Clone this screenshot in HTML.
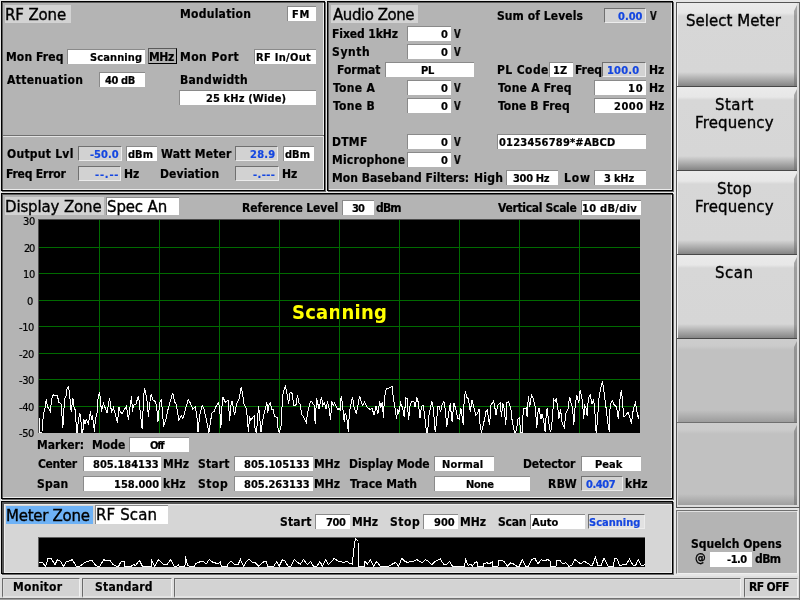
<!DOCTYPE html>
<html><head><meta charset="utf-8"><title>RF Scan</title>
<style>
html,body{margin:0;padding:0}
body{width:800px;height:600px;overflow:hidden;background:#e6e6e6;position:relative;font-family:"DejaVu Sans Condensed","DejaVu Sans","Liberation Sans",sans-serif;font-stretch:condensed;color:#000}
div,span{position:absolute;box-sizing:border-box;white-space:nowrap}
span{will-change:transform}
.p{background:#b4b4b4;border:1px solid #000;box-shadow:inset 1px 1px 0 #5c5c5c,inset -1px -1px 0 #ececec,1px 1px 0 #6a6a6a}
.L{font-weight:bold;font-size:12px;line-height:14px;height:14px;-webkit-text-stroke:.2px #000}
.B{font-weight:bold;font-size:11px;line-height:14px;height:14px;-webkit-text-stroke:.2px}
.U{color:#1446e0}
.R{font-family:"DejaVu Sans","Liberation Sans",sans-serif;font-stretch:normal;font-size:12px;line-height:14px;height:14px;-webkit-text-stroke:.3px #000}
.T{font-family:"DejaVu Sans","Liberation Sans",sans-serif;font-stretch:normal;font-size:15px;line-height:18px;height:18px;-webkit-text-stroke:.35px #000}
.Y{font-size:11px;line-height:12px;height:12px;-webkit-text-stroke:.2px #000}
.S{font-weight:bold;font-size:20px;line-height:24px;height:24px;color:#ffff00}
.b{background:#fff;border-top:1px solid #8a8a8a;border-left:1px solid #8a8a8a;height:15px}
.s{background:#d2d2d2;border-top:1px solid #707070;border-left:1px solid #707070;border-right:1px solid #ececec;border-bottom:1px solid #ececec}
.t{height:18px;background:#d3d3d3}
.k{left:677px;width:120px;height:83px;background:linear-gradient(to bottom,#ebebeb 0,#e7e7e7 10px,#d7d7d7 13px,#d6d6d6 69px,#858585 83px);border-left:1px solid #f4f4f4;box-shadow:0 1px 0 #484848}
.e{background:linear-gradient(to bottom,#cdcdcd 0,#cbcbcb 7px,#c1c1c1 11px,#c1c1c1 71px,#9c9c9c 83px);border-left:1px solid #d8d8d8;box-shadow:0 1px 0 #707070}
.k i{position:absolute;right:0;top:0;width:3px;height:100%;background:rgba(110,110,110,.55);clip-path:polygon(100% 2px,100% 100%,0 100%,0 8px)}
.st{background:#d3d3d3;border-top:1px solid #6a6a6a;border-left:1px solid #6a6a6a;border-right:1px solid #f0f0f0;border-bottom:2px solid #e2e2e2;height:20px;top:578px;box-shadow:inset 1px 1px 0 #dcdcdc}
</style></head>
<body>
<div class="p" style="left:1px;top:1px;width:324px;height:190px;"></div>
<div style="left:3px;top:135px;width:321px;height:2px;background:#707070;border-bottom:1px solid #e4e4e4"></div>
<div class="p" style="left:327px;top:1px;width:346px;height:190px;"></div>
<div class="p" style="left:1px;top:193px;width:672px;height:306px;"></div>
<div class="p" style="left:1px;top:501px;width:672px;height:73px;background:#d6d6d6;box-shadow:inset 2px 2px 0 #555,inset 3px 3px 0 #ececec,inset -1px -1px 0 #ececec,1px 1px 0 #6a6a6a"></div>
<div class="t" style="left:5px;top:5px;width:66px;"></div>
<span class="T" style="left:5.10px;top:6px;letter-spacing:-0.133px;">RF Zone</span>
<span class="L" style="left:6.10px;top:50px;letter-spacing:0.114px;">Mon Freq</span>
<div class="b" style="left:67px;top:49px;width:78px;"></div>
<span class="B" style="left:89.60px;top:51px;letter-spacing:0.114px;">Scanning</span>
<div style="left:148px;top:48px;width:29px;height:16px;border:1px solid #000;border-top-color:#5a5a5a;border-left-color:#5a5a5a"></div>
<span class="L" style="left:148.60px;top:50px;letter-spacing:-0.400px;">MHz</span>
<span class="L" style="left:7.00px;top:73px;letter-spacing:0.320px;">Attenuation</span>
<div class="b" style="left:99px;top:72px;width:46px;"></div>
<span class="B" style="left:105.00px;top:74px;letter-spacing:-0.400px;">40 dB</span>
<span class="L" style="left:179.85px;top:7px;letter-spacing:0.267px;">Modulation</span>
<div class="b" style="left:287px;top:6px;width:29px;"></div>
<span class="B" style="left:291.85px;top:8px;letter-spacing:0.800px;">FM</span>
<span class="L" style="left:179.85px;top:50px;letter-spacing:0.457px;">Mon Port</span>
<div class="b" style="left:254px;top:49px;width:62px;"></div>
<span class="B" style="left:255.85px;top:51px;letter-spacing:0.300px;">RF In/Out</span>
<span class="L" style="left:179.85px;top:73px;letter-spacing:0.300px;">Bandwidth</span>
<div class="b" style="left:179px;top:90px;width:137px;"></div>
<span class="B" style="left:205.60px;top:92px;letter-spacing:0.133px;">25 kHz (Wide)</span>
<span class="L" style="left:7.00px;top:147px;letter-spacing:0.267px;">Output Lvl</span>
<div class="b s" style="left:78px;top:146px;width:44px;"></div>
<span class="B U" style="left:90.00px;top:148px;">-50.0</span>
<div class="b" style="left:126px;top:146px;width:31px;"></div>
<span class="B" style="left:128.00px;top:148px;">dBm</span>
<span class="L" style="left:160.75px;top:147px;letter-spacing:0.178px;">Watt Meter</span>
<div class="b s" style="left:235px;top:146px;width:43px;"></div>
<span class="B U" style="left:249.85px;top:148px;letter-spacing:0.267px;">28.9</span>
<div class="b" style="left:283px;top:146px;width:31px;"></div>
<span class="B" style="left:285.00px;top:148px;">dBm</span>
<span class="L" style="left:6.10px;top:167px;letter-spacing:-0.178px;">Freq Error</span>
<div class="b s" style="left:78px;top:166px;width:43px;"></div>
<span class="B U" style="left:94.50px;top:168px;letter-spacing:0.800px;">--.--</span>
<span class="L" style="left:124.10px;top:167px;">Hz</span>
<span class="L" style="left:159.85px;top:167px;letter-spacing:0.100px;">Deviation</span>
<div class="b s" style="left:235px;top:166px;width:44px;"></div>
<span class="B U" style="left:253.00px;top:168px;letter-spacing:0.400px;">-.---</span>
<span class="L" style="left:282.35px;top:167px;">Hz</span>
<div class="t" style="left:331px;top:5px;width:87px;"></div>
<span class="T" style="left:332.50px;top:6px;letter-spacing:-0.444px;">Audio Zone</span>
<span class="L" style="left:331.60px;top:27px;letter-spacing:-0.089px;">Fixed 1kHz</span>
<div class="b" style="left:407px;top:26px;width:44px;"></div>
<span class="B" style="left:440.50px;top:28px;">0</span>
<span class="L" style="left:454.25px;top:27px;transform:scaleX(.8);transform-origin:0 0;">V</span>
<span class="L" style="left:331.60px;top:45px;letter-spacing:0.600px;">Synth</span>
<div class="b" style="left:407px;top:44px;width:44px;"></div>
<span class="B" style="left:440.50px;top:46px;">0</span>
<span class="L" style="left:454.25px;top:45px;transform:scaleX(.8);transform-origin:0 0;">V</span>
<span class="L" style="left:332.50px;top:81px;letter-spacing:0.320px;">Tone A</span>
<div class="b" style="left:407px;top:80px;width:44px;"></div>
<span class="B" style="left:440.50px;top:82px;">0</span>
<span class="L" style="left:454.25px;top:81px;transform:scaleX(.8);transform-origin:0 0;">V</span>
<span class="L" style="left:332.50px;top:99px;letter-spacing:0.320px;">Tone B</span>
<div class="b" style="left:407px;top:98px;width:44px;"></div>
<span class="B" style="left:440.50px;top:100px;">0</span>
<span class="L" style="left:454.25px;top:99px;transform:scaleX(.8);transform-origin:0 0;">V</span>
<span class="L" style="left:331.60px;top:135px;letter-spacing:0.267px;">DTMF</span>
<div class="b" style="left:407px;top:134px;width:44px;"></div>
<span class="B" style="left:440.50px;top:136px;">0</span>
<span class="L" style="left:454.25px;top:135px;transform:scaleX(.8);transform-origin:0 0;">V</span>
<span class="L" style="left:331.60px;top:153px;letter-spacing:0.178px;">Microphone</span>
<div class="b" style="left:407px;top:152px;width:44px;"></div>
<span class="B" style="left:440.50px;top:154px;">0</span>
<span class="L" style="left:454.25px;top:153px;transform:scaleX(.8);transform-origin:0 0;">V</span>
<span class="L" style="left:336.60px;top:63px;">Format</span>
<div class="b" style="left:385px;top:62px;width:89px;"></div>
<span class="B" style="left:421.10px;top:64px;letter-spacing:-0.200px;">PL</span>
<span class="L" style="left:331.60px;top:171px;letter-spacing:0.040px;">Mon Baseband Filters:</span>
<span class="L" style="left:474.10px;top:171px;letter-spacing:0.267px;">High</span>
<div class="b" style="left:506px;top:170px;width:52px;"></div>
<span class="B" style="left:512.50px;top:172px;letter-spacing:-0.320px;">300 Hz</span>
<span class="L" style="left:564.10px;top:171px;letter-spacing:0.800px;">Low</span>
<div class="b" style="left:594px;top:170px;width:52px;"></div>
<span class="B" style="left:603.75px;top:172px;letter-spacing:-0.200px;">3 kHz</span>
<span class="L" style="left:496.60px;top:9px;letter-spacing:0.067px;">Sum of Levels</span>
<div class="b s" style="left:604px;top:8px;width:42px;"></div>
<span class="B U" style="left:618.25px;top:10px;">0.00</span>
<span class="L" style="left:649.50px;top:9px;transform:scaleX(.8);transform-origin:0 0;">V</span>
<span class="L" style="left:496.60px;top:63px;letter-spacing:0.400px;">PL Code</span>
<div class="b" style="left:549px;top:62px;width:24px;"></div>
<span class="B" style="left:552.85px;top:64px;">1Z</span>
<span class="L" style="left:574.85px;top:63px;">Freq</span>
<div class="b s" style="left:602px;top:62px;width:44px;"></div>
<span class="B U" style="left:607.10px;top:64px;letter-spacing:0.200px;">100.0</span>
<span class="L" style="left:648.60px;top:63px;">Hz</span>
<span class="L" style="left:497.50px;top:81px;letter-spacing:0.240px;">Tone A Freq</span>
<div class="b" style="left:594px;top:80px;width:52px;"></div>
<span class="B" style="left:628.35px;top:82px;letter-spacing:0.800px;">10</span>
<span class="L" style="left:648.60px;top:81px;">Hz</span>
<span class="L" style="left:497.50px;top:99px;letter-spacing:0.080px;">Tone B Freq</span>
<div class="b" style="left:594px;top:98px;width:52px;"></div>
<span class="B" style="left:614.10px;top:100px;letter-spacing:0.533px;">2000</span>
<span class="L" style="left:648.60px;top:99px;">Hz</span>
<div class="b" style="left:497px;top:134px;width:149px;"></div>
<span class="B" style="left:498.75px;top:136px;letter-spacing:0.213px;">0123456789*#ABCD</span>
<div class="t" style="left:5px;top:197px;width:99px;"></div>
<span class="T" style="left:4.60px;top:198px;letter-spacing:-0.145px;">Display Zone</span>
<div class="t" style="left:106px;top:197px;width:73px;background:#fff;border-top:1px solid #8a8a8a;border-left:1px solid #8a8a8a"></div>
<span class="T" style="left:107.10px;top:198px;letter-spacing:-0.133px;">Spec An</span>
<span class="L" style="left:242.10px;top:201px;letter-spacing:-0.114px;">Reference Level</span>
<div class="b" style="left:342px;top:200px;width:32px;"></div>
<span class="B" style="left:352.00px;top:202px;letter-spacing:-0.800px;">30</span>
<span class="L" style="left:376.25px;top:201px;letter-spacing:-0.800px;">dBm</span>
<span class="L" style="left:498.00px;top:201px;letter-spacing:-0.308px;">Vertical Scale</span>
<div class="b" style="left:581px;top:200px;width:60px;"></div>
<span class="B" style="left:582.10px;top:202px;letter-spacing:0.300px;">10 dB/div</span>
<div style="left:38px;top:219px;width:602px;height:214px;background:#4c4c4c"></div>
<svg style="position:absolute;left:39px;top:220px" width="601" height="213" viewBox="0 0 601 213" shape-rendering="crispEdges"><rect width="601" height="213" fill="#000"/><rect x="60" y="0" width="1" height="213" fill="#006a00"/><rect x="120" y="0" width="1" height="213" fill="#006a00"/><rect x="180" y="0" width="1" height="213" fill="#006a00"/><rect x="240" y="0" width="1" height="213" fill="#006a00"/><rect x="300" y="0" width="1" height="213" fill="#006a00"/><rect x="360" y="0" width="1" height="213" fill="#006a00"/><rect x="420" y="0" width="1" height="213" fill="#006a00"/><rect x="480" y="0" width="1" height="213" fill="#006a00"/><rect x="540" y="0" width="1" height="213" fill="#006a00"/><rect x="0" y="27" width="601" height="1" fill="#006a00"/><rect x="0" y="53" width="601" height="1" fill="#006a00"/><rect x="0" y="80" width="601" height="1" fill="#006a00"/><rect x="0" y="106" width="601" height="1" fill="#006a00"/><rect x="0" y="133" width="601" height="1" fill="#006a00"/><rect x="0" y="159" width="601" height="1" fill="#006a00"/><rect x="0" y="186" width="601" height="1" fill="#006a00"/><polyline points="0.2,198.5 0.8,212.4 3.0,212.4 3.1,206.6 4.4,195.3 6.0,187.8 7.2,179.3 8.5,186.6 10.0,189.1 11.5,191.8 12.5,179.1 14.4,174.7 16.2,176.0 18.4,175.6 19.8,182.2 22.2,184.1 23.8,207.8 24.6,195.3 25.6,178.5 26.9,176.6 27.8,169.1 29.6,166.6 30.6,174.1 32.2,191.6 33.8,177.8 35.0,186.6 36.5,191.0 37.5,212.4 38.1,212.4 39.4,200.3 40.6,193.5 41.5,194.7 42.8,212.4 43.8,212.4 44.8,199.1 46.0,203.5 47.2,199.7 49.4,204.1 51.5,191.0 52.5,200.3 53.4,194.7 55.6,212.4 56.2,200.3 58.1,192.8 58.8,180.3 60.4,171.6 61.2,177.8 62.5,191.6 64.4,183.5 68.1,192.8 70.6,177.8 72.5,192.2 74.4,187.8 76.2,193.5 78.5,202.8 80.0,187.2 81.2,191.6 83.1,193.5 87.5,186.0 89.4,199.7 92.5,176.0 93.5,192.2 94.4,185.3 96.9,184.1 99.4,176.0 100.0,180.3 101.2,191.6 103.1,208.5 103.8,195.3 104.8,174.1 105.6,168.5 106.9,174.1 108.1,181.6 109.4,196.6 110.6,184.1 112.2,174.1 113.8,179.7 116.2,181.6 117.5,185.3 119.0,201.6 120.6,182.8 122.2,180.3 123.1,187.8 124.6,206.6 126.9,199.1 129.4,187.8 131.9,179.1 133.8,172.8 135.6,181.6 137.5,185.3 139.8,199.7 142.5,196.0 144.0,198.5 146.9,187.8 149.1,179.7 151.2,182.8 153.8,189.1 156.2,186.6 157.8,195.3 159.0,212.4 160.6,195.3 163.1,185.3 165.0,189.1 167.5,200.3 170.0,212.4 171.9,199.1 173.1,192.8 175.0,191.6 176.9,186.6 179.4,182.8 180.6,187.8 181.9,207.8 182.8,189.1 183.8,176.6 186.2,182.2 189.4,180.3 190.6,201.0 191.9,185.3 193.1,181.0 195.6,195.3 197.5,184.1 200.0,179.1 202.2,167.2 203.8,175.3 205.0,184.1 206.9,187.8 208.1,195.3 209.4,212.4 210.6,196.6 211.9,200.3 213.8,197.2 215.2,196.0 216.2,210.3 217.5,212.4 218.8,195.3 219.6,186.0 220.6,195.3 221.9,212.4 223.1,204.1 225.0,194.1 226.9,186.6 227.8,181.6 228.8,192.8 230.0,185.3 231.2,182.8 232.8,189.1 234.0,189.1 235.6,196.6 238.1,197.2 239.0,207.8 240.2,212.4 241.9,207.8 242.8,190.3 243.8,175.3 245.0,169.7 246.5,166.0 248.1,174.1 249.6,183.5 251.2,172.2 253.1,173.5 255.0,186.0 256.9,185.3 258.4,175.3 260.0,182.8 261.2,184.1 262.5,194.1 265.0,197.8 267.2,202.8 268.8,191.6 270.6,184.1 272.2,181.0 275.0,185.3 276.2,203.5 277.5,178.5 280.0,188.5 282.5,177.2 283.8,185.3 285.6,182.8 286.9,189.1 288.4,181.6 290.0,187.8 291.5,200.3 292.8,182.2 294.4,185.3 295.6,182.8 298.8,189.7 300.0,187.8 301.2,189.7 302.2,176.0 303.5,184.1 304.4,194.1 305.2,201.6 306.2,192.8 307.8,197.8 309.4,212.4 310.2,195.3 311.2,187.8 313.4,176.6 315.0,186.6 317.2,193.5 318.8,186.6 320.6,176.0 322.2,181.6 323.5,185.3 325.4,182.2 328.1,187.2 331.2,189.7 333.1,188.5 335.2,195.3 336.9,186.0 339.0,193.5 340.6,181.0 341.9,187.8 343.1,182.2 344.6,197.8 345.2,180.3 346.5,171.6 347.8,168.5 350.6,167.8 353.1,166.6 354.0,175.3 355.6,185.3 357.5,198.5 358.8,189.1 359.8,193.5 361.5,182.8 363.8,188.5 365.2,196.6 366.9,177.8 368.1,178.5 369.6,200.3 371.2,184.1 373.1,181.0 375.0,182.2 376.2,187.2 377.8,177.2 379.4,182.8 381.0,197.8 382.5,186.6 384.0,184.7 385.6,195.3 387.5,212.4 388.5,212.4 390.0,195.3 392.8,181.0 394.4,189.1 396.2,212.4 397.5,202.8 398.8,186.6 400.0,186.0 401.5,192.2 403.1,184.1 405.0,181.6 406.2,189.1 407.8,206.6 409.4,195.3 411.2,183.5 413.1,202.2 414.8,182.8 416.9,189.1 418.8,198.5 420.2,199.1 421.9,188.5 424.4,205.3 425.2,177.8 426.5,171.6 427.8,177.2 429.4,179.1 431.2,191.6 433.1,179.7 435.0,187.8 436.9,195.3 438.8,192.8 440.0,189.1 441.2,206.6 442.5,212.4 443.8,206.6 445.6,199.1 446.9,191.6 448.1,189.7 450.6,205.3 451.9,185.3 454.4,181.0 455.6,185.3 456.9,195.3 458.8,185.3 461.2,182.8 462.5,196.6 463.8,182.8 465.0,187.8 466.9,204.7 467.5,182.8 469.4,181.6 471.9,189.1 473.1,200.3 475.0,210.3 476.0,212.4 477.5,210.3 478.8,199.1 480.2,197.8 481.9,212.4 483.1,212.4 483.5,199.1 485.0,188.5 487.5,187.8 488.1,197.2 489.4,176.0 490.6,187.2 492.5,175.3 494.4,179.1 496.2,186.6 497.8,207.8 498.8,192.8 500.0,188.5 501.9,199.1 503.1,194.1 505.0,202.8 506.2,212.4 507.2,195.3 508.1,188.5 509.8,202.8 511.5,212.4 512.8,205.3 513.8,191.6 514.8,179.7 516.2,181.6 517.2,178.8 518.8,187.8 519.8,199.1 521.5,189.1 523.1,202.8 525.2,207.8 526.9,193.5 529.0,189.1 530.6,176.6 532.2,184.1 533.5,186.6 534.8,205.3 536.2,185.3 537.8,175.3 539.8,182.8 541.2,169.7 543.1,179.1 544.8,198.5 545.6,185.3 547.5,188.5 548.1,196.0 549.4,177.8 551.2,174.7 553.1,184.1 554.4,179.1 555.6,186.6 556.9,210.3 557.5,211.6 558.8,195.3 560.2,175.3 561.9,167.8 563.5,161.6 565.0,172.2 566.9,186.6 568.8,202.8 570.2,211.6 571.2,184.1 573.5,181.0 575.0,184.7 577.5,187.2 579.4,199.1 581.2,176.6 582.5,169.7 583.5,182.8 585.0,197.2 586.9,195.3 589.0,192.2 590.6,196.6 592.5,203.5 594.4,188.5 596.5,182.8 598.1,192.8 599.4,199.1 600.0,195.3" fill="none" stroke="#fff" stroke-width="1" stroke-linejoin="miter" shape-rendering="crispEdges"/></svg>
<span class="Y" style="left:22.62px;top:216px;letter-spacing:-0.400px;">30</span>
<span class="Y" style="left:23.52px;top:243px;letter-spacing:-1.200px;">20</span>
<span class="Y" style="left:22.62px;top:269px;letter-spacing:-0.400px;">10</span>
<span class="Y" style="left:26.62px;top:296px;">0</span>
<span class="Y" style="left:19.02px;top:322px;letter-spacing:-0.400px;">-10</span>
<span class="Y" style="left:19.02px;top:349px;letter-spacing:-0.400px;">-20</span>
<span class="Y" style="left:19.02px;top:375px;letter-spacing:-0.400px;">-30</span>
<span class="Y" style="left:19.02px;top:402px;letter-spacing:-0.400px;">-40</span>
<span class="Y" style="left:19.02px;top:428px;letter-spacing:-0.400px;">-50</span>
<span class="S" style="left:291.85px;top:300px;letter-spacing:0.229px;">Scanning</span>
<div style="left:339px;top:301px;width:1px;height:25px;background:#006a00"></div>
<span class="L" style="left:37.10px;top:438px;">Marker:</span>
<span class="L" style="left:91.60px;top:438px;">Mode</span>
<div class="b" style="left:129px;top:437px;width:60px;"></div>
<span class="B" style="left:150.00px;top:439px;letter-spacing:-1.200px;">Off</span>
<span class="L" style="left:38.00px;top:457px;letter-spacing:-0.320px;">Center</span>
<div class="b" style="left:83px;top:456px;width:78px;"></div>
<span class="B" style="left:92.50px;top:458px;">805.184133</span>
<span class="L" style="left:162.85px;top:457px;">MHz</span>
<span class="L" style="left:198.35px;top:457px;letter-spacing:0.200px;">Start</span>
<div class="b" style="left:234px;top:456px;width:79px;"></div>
<span class="B" style="left:244.25px;top:458px;">805.105133</span>
<span class="L" style="left:314.10px;top:457px;">MHz</span>
<span class="L" style="left:349.10px;top:457px;letter-spacing:-0.073px;">Display Mode</span>
<div class="b" style="left:434px;top:456px;width:60px;"></div>
<span class="B" style="left:442.10px;top:458px;letter-spacing:0.160px;">Normal</span>
<span class="L" style="left:523.35px;top:457px;letter-spacing:-0.114px;">Detector</span>
<div class="b" style="left:581px;top:456px;width:60px;"></div>
<span class="B" style="left:595.35px;top:458px;">Peak</span>
<span class="L" style="left:37.10px;top:477px;letter-spacing:0.267px;">Span</span>
<div class="b" style="left:83px;top:476px;width:78px;"></div>
<span class="B" style="left:113.60px;top:478px;">158.000</span>
<span class="L" style="left:162.85px;top:477px;">kHz</span>
<span class="L" style="left:198.35px;top:477px;letter-spacing:0.533px;">Stop</span>
<div class="b" style="left:234px;top:476px;width:79px;"></div>
<span class="B" style="left:244.25px;top:478px;">805.263133</span>
<span class="L" style="left:314.10px;top:477px;">MHz</span>
<span class="L" style="left:350.00px;top:477px;">Trace Math</span>
<div class="b" style="left:434px;top:476px;width:96px;"></div>
<span class="B" style="left:466.10px;top:478px;letter-spacing:-0.267px;">None</span>
<span class="L" style="left:547.85px;top:477px;letter-spacing:0.400px;">RBW</span>
<div class="b s" style="left:581px;top:476px;width:42px;"></div>
<span class="B U" style="left:586.25px;top:478px;letter-spacing:-0.400px;">0.407</span>
<span class="L" style="left:624.85px;top:477px;">kHz</span>
<div class="t" style="left:6px;top:506px;width:87px;background:#6eb2f6"></div>
<span class="T" style="left:6.10px;top:507px;letter-spacing:-0.267px;">Meter Zone</span>
<div class="t" style="left:95px;top:505px;width:73px;background:#fff;height:19px;border-top:1px solid #8a8a8a;border-left:1px solid #8a8a8a"></div>
<span class="T" style="left:95.85px;top:506px;letter-spacing:0.133px;">RF Scan</span>
<span class="L" style="left:279.85px;top:515px;letter-spacing:0.200px;">Start</span>
<div class="b" style="left:315px;top:514px;width:35px;"></div>
<span class="B" style="left:326.25px;top:516px;letter-spacing:-0.400px;">700</span>
<span class="L" style="left:352.10px;top:515px;">MHz</span>
<span class="L" style="left:390.35px;top:515px;letter-spacing:0.533px;">Stop</span>
<div class="b" style="left:423px;top:514px;width:35px;"></div>
<span class="B" style="left:433.75px;top:516px;">900</span>
<span class="L" style="left:459.85px;top:515px;">MHz</span>
<span class="L" style="left:498.35px;top:515px;letter-spacing:-0.267px;">Scan</span>
<div class="b" style="left:530px;top:514px;width:55px;"></div>
<span class="B" style="left:532.00px;top:516px;">Auto</span>
<div class="b s" style="left:588px;top:514px;width:57px;background:#e2e2e2"></div>
<span class="B U" style="left:589.10px;top:516px;">Scanning</span>
<div style="left:38px;top:537px;width:607px;height:30px;background:#606060"></div>
<svg style="position:absolute;left:39px;top:538px" width="606" height="29" viewBox="0 0 606 29"><rect width="606" height="29" fill="#000"/><polyline points="0.2,24.5 4.0,25.0 6.5,28.6 9.0,20.4 12.1,20.4 15.9,26.6 18.4,21.6 21.5,23.5 24.6,28.6 27.1,23.5 30.9,22.9 33.4,21.6 37.1,28.2 40.9,28.2 45.2,25.0 49.0,23.2 52.8,22.2 55.9,26.6 59.0,28.5 60.9,28.2 64.6,21.6 67.8,22.9 70.9,22.2 74.0,26.6 77.1,28.2 79.6,28.2 82.1,23.5 85.2,23.2 85.5,28.6 91.5,28.6 94.6,26.6 96.5,27.5 99.0,24.1 100.5,22.5 103.4,28.2 106.5,28.6 112.1,28.6 112.5,22.2 115.9,28.2 119.2,21.6 124.0,26.0 128.4,26.2 131.5,21.6 135.2,28.2 137.8,28.2 139.6,26.6 140.2,28.6 145.9,28.6 146.5,18.2 148.4,27.2 150.2,28.2 155.2,28.2 157.1,25.4 160.2,24.1 164.0,23.2 167.1,26.0 170.2,21.6 174.0,24.5 176.5,25.0 179.0,26.0 181.8,23.8 182.1,28.6 188.4,28.6 188.8,26.0 192.1,23.2 195.9,26.6 199.0,26.6 201.5,21.6 204.6,28.6 207.1,23.5 210.2,21.4 213.4,24.1 216.5,24.8 219.6,28.2 222.8,25.4 225.2,23.2 227.8,23.8 228.4,28.6 234.6,28.6 237.8,23.5 240.2,28.2 243.4,21.6 245.9,22.9 249.0,28.2 252.1,28.2 255.2,21.4 258.4,24.5 261.5,26.0 264.6,21.4 268.4,26.6 271.5,23.5 274.6,28.5 277.8,28.5 280.9,23.5 283.4,28.2 286.5,21.6 289.6,26.6 295.2,20.4 299.0,23.2 302.1,23.5 304.6,24.5 307.8,23.2 310.9,25.4 313.4,26.0 314.6,12.2 316.5,0.4 319.0,2.9 319.2,28.6 325.2,28.6 325.5,23.2 328.4,26.0 331.5,21.6 334.6,28.2 337.8,23.5 341.5,28.6 347.1,28.6 350.2,27.9 353.4,26.0 356.5,24.5 359.6,28.2 362.8,20.4 365.2,22.9 368.4,24.5 371.5,23.5 374.6,23.2 377.8,21.6 380.2,23.2 383.4,24.5 386.5,21.6 389.6,23.5 392.8,26.6 395.9,23.5 399.0,22.2 401.2,20.8 404.6,26.2 407.8,26.0 410.5,23.5 413.4,28.2 420.2,28.2 420.5,28.6 425.9,28.6 426.2,20.4 429.0,27.2 432.1,26.6 433.4,27.9 435.9,24.8 438.0,23.8 438.4,28.6 444.0,28.6 444.6,26.0 447.8,24.5 450.2,26.0 453.4,23.5 453.8,28.6 459.0,28.6 459.4,22.9 462.8,22.2 465.2,23.5 468.4,28.2 471.5,24.8 474.6,26.0 477.8,28.2 480.2,28.2 483.4,21.6 486.5,28.2 489.6,28.2 492.8,21.6 495.9,20.4 499.0,26.0 502.0,21.8 505.8,22.7 508.8,21.5 511.3,23.3 511.6,28.6 517.0,28.6 517.3,22.2 520.8,22.2 523.8,26.0 526.8,24.5 529.8,28.2 532.8,27.5 535.8,21.5 541.8,26.0 544.8,23.0 548.5,25.2 553.0,28.2 556.3,19.2 559.0,27.5 562.0,27.5 565.0,20.0 569.5,28.6 574.8,28.6 575.2,20.8 577.8,20.3 580.8,27.5 584.5,26.8 587.5,26.0 590.5,21.2 594.2,27.5 596.5,27.8 599.2,21.5 602.5,27.8 605.8,26.8" fill="none" stroke="#fff" stroke-width="1" shape-rendering="crispEdges"/></svg>
<div style="left:676px;top:2px;width:124px;height:506px;background:#dcdcdc;border:1px solid #555;border-right-color:#666"></div>
<div style="left:799px;top:508px;width:1px;height:92px;background:#777"></div>
<div class="k" style="top:3px;"><i></i></div>
<div class="k" style="top:87px;"><i></i></div>
<div class="k" style="top:171px;"><i></i></div>
<div class="k" style="top:255px;"><i></i></div>
<div class="k e" style="top:339px;"><i></i></div>
<div class="k e" style="top:423px;height:82px;box-shadow:none"><i></i></div>
<span class="T" style="left:685.62px;top:12px;letter-spacing:0.029px;">Select Meter</span>
<span class="T" style="left:714.85px;top:96px;letter-spacing:0.440px;">Start</span>
<span class="T" style="left:694.58px;top:114px;letter-spacing:0.140px;">Frequency</span>
<span class="T" style="left:716.58px;top:180px;letter-spacing:0.213px;">Stop</span>
<span class="T" style="left:694.58px;top:198px;letter-spacing:0.140px;">Frequency</span>
<span class="T" style="left:715.14px;top:264px;letter-spacing:0.533px;">Scan</span>
<div style="left:676px;top:510px;width:122px;height:64px;background:#b4b4b4;border-top:1px solid #707070;border-left:1px solid #707070;border-right:1px solid #f0f0f0;border-bottom:1px solid #f0f0f0;box-shadow:inset 1px 1px 0 #e0e0e0"></div>
<span class="L" style="left:691.10px;top:537px;letter-spacing:0.013px;">Squelch Opens</span>
<span class="L" style="left:695.10px;top:551px;">@</span>
<div class="b" style="left:710px;top:552px;width:42px;border:0"></div>
<span class="B" style="left:727.02px;top:553px;letter-spacing:-0.480px;">-1.0</span>
<span class="L" style="left:754.54px;top:552px;letter-spacing:-0.560px;">dBm</span>
<div style="left:0;top:576px;width:799px;height:24px;background:#dedede;border-bottom:1px solid #a0a0a0;box-shadow:inset 0 -1px 0 #707070"></div>
<div class="st" style="left:2px;width:78px"></div>
<div class="st" style="left:82px;width:90px"></div>
<div class="st" style="left:174px;width:567px"></div>
<div class="st" style="left:744px;width:54px"></div>
<span class="L" style="left:12.85px;top:580px;letter-spacing:0.267px;">Monitor</span>
<span class="L" style="left:94.85px;top:580px;letter-spacing:0.229px;">Standard</span>
<span class="L" style="left:749.10px;top:580px;letter-spacing:-0.608px;">RF OFF</span>
</body></html>
